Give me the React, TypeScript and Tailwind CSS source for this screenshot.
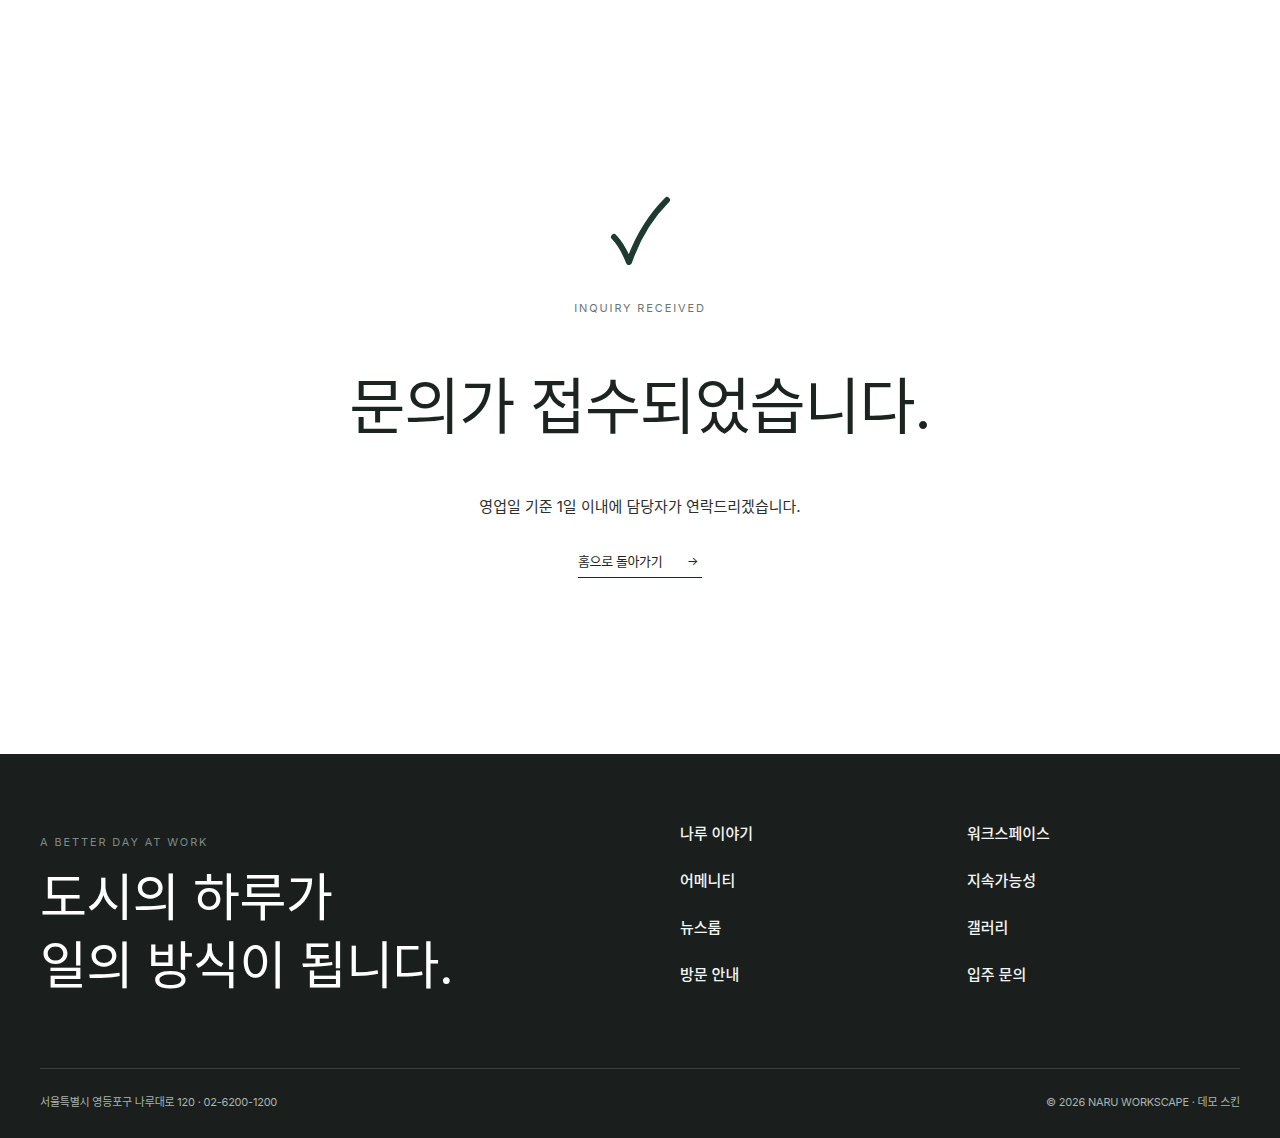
import React from 'react';

const KR = "font-['Inter','Noto_Sans_CJK_KR',sans-serif]";

const navLeft = ['나루 이야기', '어메니티', '뉴스룸', '방문 안내'];
const navRight = ['워크스페이스', '지속가능성', '갤러리', '입주 문의'];

function CheckMark() {
  return (
    <svg width="64" height="72" viewBox="0 0 64 72" fill="none" className="block">
      <path
        d="M5 42 Q13 50 20 67 Q33 30 58 5"
        stroke="#1d3b2f"
        strokeWidth="6"
        strokeLinecap="round"
        strokeLinejoin="round"
      />
    </svg>
  );
}

export default function App() {
  return (
    <div className={`${KR} bg-white min-h-[1138px]`}>
      {/* confirmation */}
      <section className="h-[754px] flex flex-col items-center pt-[195px]">
        <div className="h-[72px] flex justify-center pl-[1px]">
          <CheckMark />
        </div>
        <p className="mt-[33px] text-[11px] leading-4 tracking-[0.17em] text-[#6b7570] uppercase">
          Inquiry Received
        </p>
        <h1 className="mt-[56px] text-[61px] leading-[70px] font-normal tracking-[-0.02em] text-[#1c2420]">
          문의가 접수되었습니다.
        </h1>
        <p className="mt-[53px] text-[15px] leading-6 text-[#2b2f2d]">
          영업일 기준 1일 이내에 담당자가 연락드리겠습니다.
        </p>
        <a
          href="#"
          className="mt-[32px] w-[124px] flex items-center justify-between pb-[6px] border-b border-[#1c2420] text-[13px] leading-5 tracking-[-0.03em] text-[#1c2420]"
        >
          <span>홈으로 돌아가기</span>
          <span className="text-[12px] pr-[4px]">→</span>
        </a>
      </section>

      {/* footer */}
      <footer className="bg-[#1a1f1e] px-10 pt-[69px] pb-[29px]">
        <div className="grid grid-cols-[640px_287px_1fr]">
          <div className="pt-[11px]">
            <p className="text-[11px] leading-4 tracking-[0.17em] text-[#7f8a84] uppercase">
              A Better Day at Work
            </p>
            <h2 className="mt-[14px] text-[51px] leading-[68px] font-normal tracking-[-0.01em] text-white">
              도시의 하루가
              <br />
              일의 방식이 됩니다.
            </h2>
          </div>
          <ul className="flex flex-col gap-[25px]">
            {navLeft.map((n) => (
              <li key={n} className="text-[15px] leading-[22px] font-medium text-[#f3f5f2]">
                {n}
              </li>
            ))}
          </ul>
          <ul className="flex flex-col gap-[25px]">
            {navRight.map((n) => (
              <li key={n} className="text-[15px] leading-[22px] font-medium text-[#f3f5f2]">
                {n}
              </li>
            ))}
          </ul>
        </div>
        <div className="mt-[68px] border-t border-[#3a423f] pt-[25px] flex justify-between text-[11px] leading-4 tracking-[-0.02em] text-[#a9b5ad]">
          <span>서울특별시 영등포구 나루대로 120 · 02-6200-1200</span>
          <span>© 2026 NARU WORKSCAPE · 데모 스킨</span>
        </div>
      </footer>
    </div>
  );
}
